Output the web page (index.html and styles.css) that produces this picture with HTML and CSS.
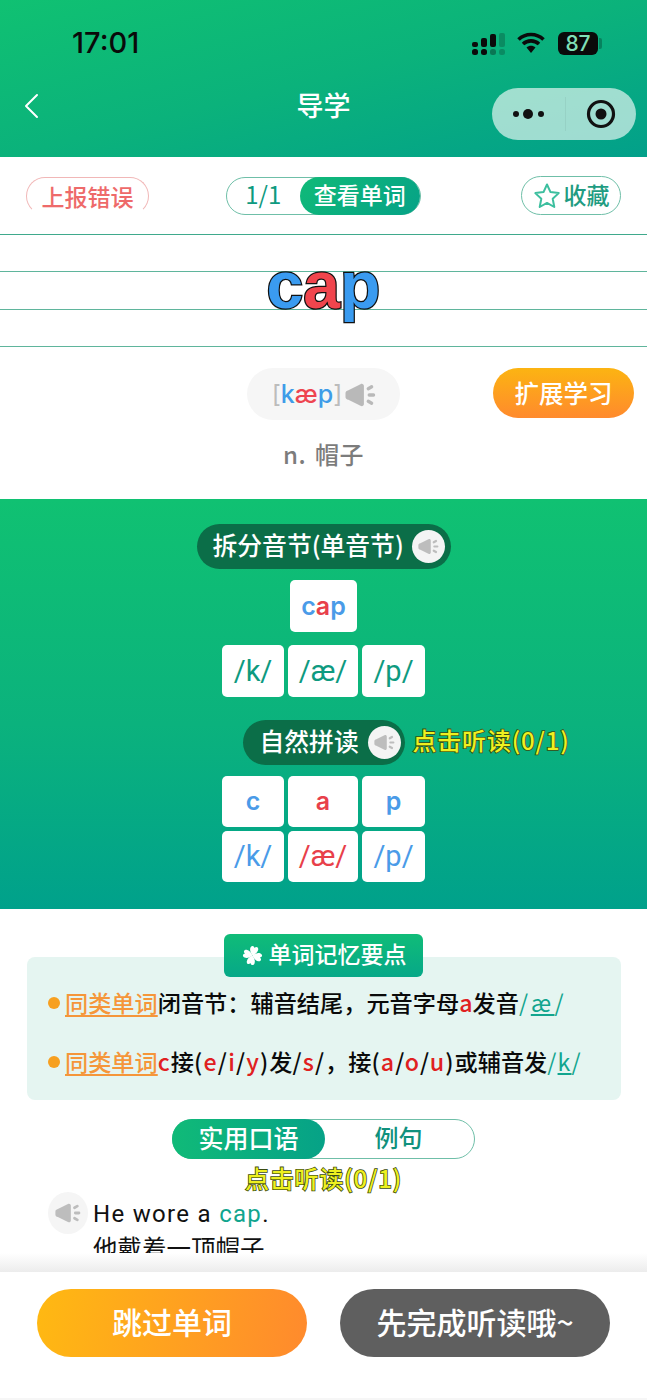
FILE: index.html
```html
<!DOCTYPE html>
<html lang="zh">
<head>
<meta charset="utf-8">
<title>导学</title>
<link rel="stylesheet" href="styles.css">
</head>
<body>
<svg class="defs" width="0" height="0" aria-hidden="true">
  <symbol id="spk" viewBox="0 0 32 26">
    <path d="M3.500 8L16 1.800c1.800-.9 3.500.2 3.500 2v18.400c0 1.800-1.700 2.900-3.500 2L3.500 18C1.600 17.500.5 16.500.5 15v-4c0-1.500 1.100-2.500 3-3z" fill="currentColor"/>
    <path d="M24 6.500l3.500-2M25 13h4.500M24 19.500l3.500 2" stroke="currentColor" stroke-width="3.400" stroke-linecap="round" fill="none"/>
  </symbol>
</svg>
<div class="page">
  <header class="header">
    <div class="status">
      <span class="time">17:01</span>
      <div class="status-icons">
        <svg class="signal" viewBox="0 0 34 22" width="34" height="22">
          <g fill="#0b0b0b">
            <rect x="0" y="9" width="6" height="5" rx="2"/><rect x="9" y="5" width="6" height="9" rx="2"/><rect x="18" y="1" width="6" height="13" rx="2"/>
            <rect x="0" y="16" width="6" height="6" rx="2.500"/><rect x="9" y="16" width="6" height="6" rx="2.500"/><rect x="18" y="16" width="6" height="6" rx="2.500" opacity=".35"/>
          </g>
          <g fill="#0b0b0b" opacity=".22"><rect x="27" y="0" width="6" height="14" rx="2"/><rect x="27" y="16" width="6" height="6" rx="2.500"/></g>
        </svg>
        <svg class="wifi" viewBox="0 0 28 22" width="28" height="22">
          <path d="M1.500 7.500C8.500.8 19.500.8 26.500 7.500M6 12c4.500-4.200 11.500-4.200 16 0" stroke="#0b0b0b" stroke-width="3.600" fill="none"/>
          <path d="M9.500 15.500c2.600-2.300 6.400-2.300 9 0L14 21z" fill="#0b0b0b"/>
        </svg>
        <div class="battery"><span class="battery-fill">87</span></div>
      </div>
    </div>
    <div class="nav">
      <svg class="back" viewBox="0 0 16 26" width="16" height="26"><path d="M14 2L3 13l11 11" stroke="#fff" stroke-width="2" fill="none" stroke-linecap="round" stroke-linejoin="round"/></svg>
      <h1 class="title">导学</h1>
      <div class="capsule">
        <svg class="more" viewBox="0 0 34 12" width="34" height="12"><circle cx="4" cy="6" r="3" fill="#111"/><circle cx="16" cy="6" r="5" fill="#111"/><circle cx="29" cy="6" r="3" fill="#111"/></svg>
        <span class="capsule-sep"></span>
        <svg class="target" viewBox="0 0 30 30" width="30" height="30"><circle cx="15" cy="15" r="12.500" stroke="#111" stroke-width="3.200" fill="none"/><circle cx="15" cy="15" r="5.500" fill="#111"/></svg>
      </div>
    </div>
  </header>

  <main class="scroll">
    <div class="toolbar">
      <button class="report">上报错误</button>
      <div class="counter"><span class="count">1/1</span><span class="view">查看单词</span></div>
      <button class="fav">
        <svg viewBox="0 0 28 28" width="28" height="28"><path d="M14 2.500l3.500 7.600 8.200 1-6 5.700 1.600 8.200L14 20.900 6.700 25l1.600-8.200-6-5.700 8.200-1z" stroke="#3dbf9f" stroke-width="2" stroke-linejoin="round" fill="none"/></svg>
        <span class="fav-text">收藏</span>
      </button>
    </div>

    <section class="lines">
      <div class="line-row"></div><div class="line-row"></div><div class="line-row"></div>
      <div class="word"><span class="blue">c</span><span class="red">a</span><span class="blue">p</span></div>
    </section>

    <section class="pron">
      <div class="pron-row">
        <div class="phon-pill">
          <span class="phon"><span class="br">[</span><span class="blue2">k</span><span class="red2">æ</span><span class="blue2">p</span><span class="br">]</span></span>
          <svg class="spk-big"><use href="#spk"/></svg>
        </div>
        <button class="extend">扩展学习</button>
      </div>
      <p class="meaning">n. 帽子</p>
    </section>

    <section class="green">
      <div class="sec-pill sec-a">
        <span class="sec-text">拆分音节(单音节)</span>
        <span class="spk-disc"><svg><use href="#spk"/></svg></span>
      </div>
      <div class="tile tile-word"><span class="b">c</span><span class="r">a</span><span class="b">p</span></div>
      <div class="tiles tiles-a">
        <div class="tile ph t">/k/</div><div class="tile ph t">/æ/</div><div class="tile ph t">/p/</div>
      </div>
      <div class="sec-row">
        <div class="sec-pill sec-b">
          <span class="sec-text">自然拼读</span>
          <span class="spk-disc"><svg><use href="#spk"/></svg></span>
        </div>
        <span class="hint hint-side">点击听读(0/1)</span>
      </div>
      <div class="tiles tiles-b">
        <div class="tile letter b">c</div><div class="tile letter r">a</div><div class="tile letter b">p</div>
        <div class="tile ph b">/k/</div><div class="tile ph r">/æ/</div><div class="tile ph b">/p/</div>
      </div>
    </section>

    <section class="memory">
      <div class="mem-tag">
        <svg viewBox="0 0 24 24" width="23" height="23"><g fill="#fff" transform="rotate(15 12 12)"><path id="leaf" d="M12 12C9.500 10 7.500 7.500 7.800 4.500 8.200 1.800 11 1.500 12 4c1-2.500 3.800-2.200 4.200.5.3 3-1.700 5.500-4.200 7.500z"/><use href="#leaf" transform="rotate(90 12 12)"/><use href="#leaf" transform="rotate(180 12 12)"/><use href="#leaf" transform="rotate(270 12 12)"/></g></svg>
        <span class="tag-text">单词记忆要点</span>
      </div>
      <div class="mem-panel">
        <p class="mem-line"><i class="dot"></i><u class="same">同类单词</u>闭音节：辅音结尾，元音字母<b class="hl">a</b>发音<span class="tl ae">/<u>æ</u>/</span></p>
        <p class="mem-line"><i class="dot"></i><u class="same">同类单词</u><span class="lat hl">c</span>接<span class="lat">(<b class="hl">e</b>/<b class="hl">i</b>/<b class="hl">y</b>)</span>发<span class="lat">/<b class="hl">s</b>/</span>，接<span class="lat">(<b class="hl">a</b>/<b class="hl">o</b>/<b class="hl">u</b>)</span>或辅音发<span class="tl">/<u>k</u>/</span></p>
      </div>
    </section>

    <div class="tabs"><span class="tab active">实用口语</span><span class="tab">例句</span></div>
    <div class="hint hint-center">点击听读(0/1)</div>
    <div class="sentence">
      <span class="spk-round"><svg><use href="#spk"/></svg></span>
      <div class="sent-text">
        <p class="en">He wore a <span class="tl">cap</span>.</p>
        <p class="zh">他戴着一顶帽子</p>
      </div>
    </div>
  </main>

  <div class="fade"></div>
  <footer class="footer">
    <button class="foot-btn skip">跳过单词</button>
    <button class="foot-btn wait">先完成听读哦~</button>
  </footer>
</div>
</body>
</html>
```

FILE: styles.css
```css
* { box-sizing: border-box; }
html, body { margin: 0; padding: 0; background: #fff; }
body { font-family: "Noto Sans CJK SC", "Liberation Sans", sans-serif; }
p, h1 { margin: 0; }
button { font: inherit; border: 0; padding: 0; background: none; }
.defs { position: absolute; }

.page { width: 647px; height: 1400px; display: flex; flex-direction: column; overflow: hidden; background: #fff; }

/* header */
.header { height: 157px; flex: none; background: linear-gradient(to bottom right, #10c172 0%, #0bb27b 50%, #02a08a 100%); }
.status { height: 88px; padding: 24px 42px 0 72px; display: flex; justify-content: space-between; align-items: flex-start; }
.time { font-family: Inter, sans-serif; font-size: 29px; line-height: 38px; font-weight: 500; color: #0a0a0a; }
.status-icons { display: flex; align-items: center; gap: 11px; height: 38px; }
.signal { margin-top: 1px; }
.wifi { margin-right: 2px; }
.battery { width: 47px; height: 23px; display: flex; }
.battery-fill { width: 40px; height: 23px; background: #0a0a0a; border-radius: 6px; color: #7fe0b8; font: 500 21px/23px Inter, sans-serif; text-align: center; }
.battery::after { content: ""; width: 3px; height: 11px; margin: 6px 0 0 1px; background: rgba(0,0,0,.25); border-radius: 0 2px 2px 0; }
.nav { display: grid; grid-template-columns: 1fr auto 1fr; align-items: center; padding: 0 11px; height: 52px; }
.back { margin: -16px 0 0 12px; }
.title { font-size: 27px; line-height: 34px; font-weight: 500; color: #fff; margin-top: -18px; }
.capsule { justify-self: end; width: 144px; height: 52px; border-radius: 26px; background: rgba(255,255,255,.62); display: flex; align-items: center; padding-left: 20px; }
.capsule-sep { width: 1px; height: 34px; background: rgba(0,0,0,.05); margin: 0 20px 0 19px; }

/* toolbar */
.toolbar { height: 77px; display: grid; grid-template-columns: 1fr auto 1fr; align-items: center; padding: 0 26px; }
.report { justify-self: start; width: 123px; height: 38px; border: 1px solid #f1b7b7; border-bottom-color: #fff; border-radius: 19px; color: #ee6a6a; font-size: 23px; line-height: 34px; font-weight: 500; }
.counter { width: 195px; height: 38px; margin-left: -1px; display: flex; align-items: center; border: 1px solid #6fbfa8; border-radius: 19px; }
.count { width: 74px; padding-bottom: 4px; text-align: center; font-size: 24px; color: #0e9a80; }
.view { width: 120px; height: 38px; border-radius: 19px; background: linear-gradient(135deg, #10ba78, #06a287); color: #fff; font-size: 23px; line-height: 34px; text-align: center; font-weight: 500; }
.fav { justify-self: end; width: 100px; height: 39px; border: 1px solid #6fbfa8; border-radius: 20px; display: flex; align-items: center; justify-content: center; gap: 3px; color: #1f9c82; font-size: 23px; font-weight: 500; }
.fav-text { padding-bottom: 4px; }

/* four-line paper */
.lines { position: relative; border-top: 1px solid #3fa98c; }
.line-row { height: 37.300px; border-bottom: 1px solid #5fb59c; }
.word { position: absolute; left: 0; right: 0; top: 14px; text-align: center; font-family: "Liberation Sans", sans-serif; font-size: 66px; line-height: 72px; font-weight: 700; }
.word span { -webkit-text-stroke: 2.500px #111; paint-order: stroke fill; }
.word .blue { color: #3a9bf0; }
.word .red { color: #f0454d; }

/* pronunciation */
.pron { height: 152px; padding-top: 21px; }
.pron-row { display: grid; grid-template-columns: 1fr auto 1fr; align-items: start; }
.phon-pill { grid-column: 2; width: 153px; height: 52px; border-radius: 26px; background: #f6f6f6; display: flex; align-items: center; justify-content: center; gap: 3px; padding-left: 1px; }
.phon { font-family: Inter, sans-serif; font-size: 25px; font-weight: 500; }
.br { color: #bcbcbc; font-weight: 400; }
.blue2 { color: #3f9ce8; }
.red2 { color: #ee4450; }
.spk-big { width: 31px; height: 26px; color: #b9b9b9; margin-top: 2px; }
.extend { justify-self: end; margin-right: 13px; width: 141px; height: 50px; border-radius: 25px; background: linear-gradient(180deg, #fcb412, #ff8a2d); color: #fff; font-size: 24.500px; line-height: 48px; font-weight: 500; }
.meaning { margin-top: 16px; text-align: center; font-size: 24px; line-height: 36px; letter-spacing: .5px; word-spacing: 3px; color: #7c7c7c; font-weight: 500; }

/* green section */
.green { height: 410px; padding-top: 25px; background: linear-gradient(180deg, #10c172 0%, #0bb27d 55%, #00a18b 100%); display: flex; flex-direction: column; align-items: center; }
.sec-pill { height: 45px; border-radius: 23px; background: #0b6e48; color: #fff; display: flex; align-items: center; font-size: 24.800px; font-weight: 500; }
.sec-text { padding-bottom: 4px; }
.sec-a { width: 254px; padding-left: 16px; gap: 8px; }
.sec-b { width: 162px; padding-left: 17px; gap: 9px; }
.spk-disc { width: 33px; height: 33px; border-radius: 50%; background: #f4f4f4; display: flex; align-items: center; justify-content: center; color: #bdbdbd; flex: none; }
.spk-disc svg { width: 21px; height: 17px; }
.tile { background: #fff; border-radius: 5px; display: flex; align-items: center; justify-content: center; font-family: Inter, sans-serif; font-weight: 600; }
.tile-word { width: 67px; height: 52px; margin-top: 11px; font-size: 25px; }
.tiles { display: grid; grid-template-columns: 62px 70px 63px; gap: 4px; }
.tiles-a { margin-top: 13px; grid-auto-rows: 52px; }
.tiles-b { margin-top: 11px; grid-auto-rows: 51px; }
.ph { font-family: Roboto, sans-serif; font-weight: 400; font-size: 29px; }
.letter { font-size: 25px; }
.t { color: #0e9a80; }
.b { color: #4a9be8; }
.r { color: #e8404a; }
.sec-row { width: 100%; margin-top: 23px; display: grid; grid-template-columns: 1fr auto 1fr; align-items: center; column-gap: 8px; }
.sec-row .sec-pill { grid-column: 2; }
.hint { font-size: 24px; line-height: 32px; font-weight: 500; letter-spacing: .8px; color: #eef020; -webkit-text-stroke: 1.600px #3a4a10; paint-order: stroke fill; white-space: nowrap; }
.hint-side { padding-bottom: 4px; }
.hint-center { text-align: center; margin-top: 3px; }

/* memory */
.memory { padding: 25px 26px 0 27px; display: flex; flex-direction: column; }
.mem-tag { position: relative; align-self: center; width: 199px; height: 43px; margin-right: 1px; border-radius: 6px; background: linear-gradient(180deg, #10bc78, #06a888); color: #fff; font-size: 23px; font-weight: 500; display: flex; align-items: center; justify-content: center; gap: 5px; margin-bottom: -20px; }
.tag-text { padding-bottom: 4px; }
.mem-panel { background: #e5f5f1; border-radius: 8px; height: 143px; padding: 18px 0 0 21px; }
.mem-line { height: 59px; padding-bottom: 4px; display: flex; align-items: center; font-size: 23.200px; font-weight: 500; color: #0a0a0a; white-space: nowrap; }
.mem-line b { font-weight: 500; }
.lat { letter-spacing: 1.100px; }
.dot { width: 12px; height: 12px; margin-top: 2px; border-radius: 50%; background: #f7a020; margin-right: 5px; flex: none; }
.same { color: #f5963a; text-underline-offset: 3px; }
.hl { color: #e02020; }
.tl { color: #11a58e; }
.mem-line .tl { font-weight: 400; letter-spacing: 1.200px; }
.mem-line .ae { letter-spacing: 3.400px; }

/* tabs + sentence */
.tabs { width: 303px; height: 40px; margin: 19px auto 0; border: 1px solid #6fbfa8; border-radius: 20px; display: flex; font-size: 24px; font-weight: 500; }
.tab { width: 147px; line-height: 34px; text-align: center; color: #10917d; }
.tab.active { width: 153px; margin: -1px 0 -1px -1px; font-size: 25px; line-height: 36px; border-radius: 20px; background: linear-gradient(90deg, #10ba78, #06a287); color: #fff; }
.scroll { flex: 1; min-height: 0; overflow: hidden; }
.sentence { display: flex; padding: 0 0 0 48px; gap: 5px; margin-top: -3px; }
.spk-round { width: 40px; height: 42px; border-radius: 50%; background: #f5f5f5; display: flex; align-items: center; justify-content: center; color: #bdbdbd; flex: none; margin-top: 1px; }
.spk-round svg { width: 26px; height: 22px; }
.en { font-family: Roboto, sans-serif; font-size: 24px; line-height: 32px; letter-spacing: 1.300px; color: #111; margin-top: 7px; }
.zh { font-size: 24.500px; line-height: 36px; color: #111; }

/* footer */
.fade { height: 19px; flex: none; background: linear-gradient(180deg, #fff, #ececec); }
.footer { height: 128px; flex: none; background: #fff; border-bottom: 2px solid #f6f6f6; padding: 17px 0 0 37px; display: flex; gap: 33px; align-items: flex-start; }
.foot-btn { width: 270px; height: 68px; padding-bottom: 4px; border-radius: 34px; color: #fff; font-size: 30px; font-weight: 500; }
.skip { background: linear-gradient(100deg, #ffb912, #ff8a2d); }
.wait { background: #5f5f5f; }
```
